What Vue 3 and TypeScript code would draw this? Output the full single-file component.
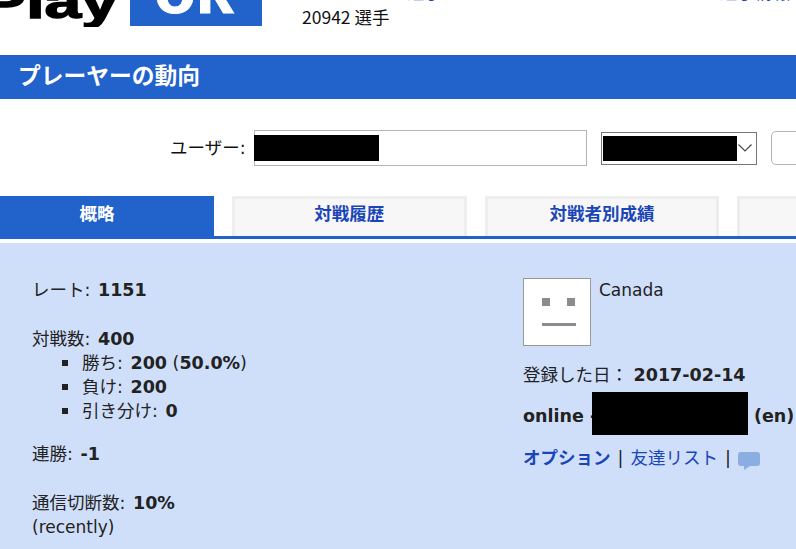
<script setup lang="ts">
const tabs = ['概略', '対戦履歴', '対戦者別成績', '']
</script>

<template>
  <div class="page">
    <header class="top">
      <div class="logo">
        <span class="logo-play">Play</span>
        <span class="logo-ok"><span class="ok-text">ok</span></span>
      </div>
      <div class="top-info">
        <a class="top-link"><span>オンラインの選手たち</span></a>
        <span class="count">20942 選手</span>
      </div>
      <a class="top-link top-right"><span>選手情報</span></a>
    </header>

    <h1 class="title">プレーヤーの動向</h1>

    <form class="search">
      <label class="user-label">ユーザー:</label>
      <div class="user-input"><span class="black user-black"></span></div>
      <div class="select">
        <span class="black select-black"></span>
        <svg class="chevron" width="14" height="8" viewBox="0 0 14 8">
          <path d="M0.5 0.5l6.5 6.5 6.5-6.5" fill="none" stroke="#444" stroke-width="1.1" />
        </svg>
      </div>
      <div class="go"></div>
    </form>

    <nav class="tabs">
      <div v-for="(tab, i) in tabs" :key="i" class="tab" :class="{ active: i === 0 }">{{ tab }}</div>
    </nav>

    <section class="panel">
      <div class="col-left">
        <p class="row">レート: <b class="val">1151</b></p>
        <p class="row gap">対戦数: <b class="val">400</b></p>
        <ul class="list">
          <li>勝ち: <b class="val">200</b> (<b>50.0%</b>)</li>
          <li>負け: <b class="val">200</b></li>
          <li>引き分け: <b class="val">0</b></li>
        </ul>
        <p class="row gap-sm">連勝: <b class="val">-1</b></p>
        <p class="row gap">通信切断数: <b class="val">10%</b></p>
        <p class="row latin recently">(recently)</p>
      </div>
      <div class="col-right">
        <div class="profile">
          <div class="avatar">
            <svg width="66" height="66" viewBox="0 0 66 66">
              <rect x="18" y="19" width="8" height="8" fill="#8c8c8c" />
              <rect x="43" y="19" width="8" height="8" fill="#8c8c8c" />
              <rect x="18" y="44" width="34" height="3" fill="#8c8c8c" />
            </svg>
          </div>
          <span class="country latin">Canada</span>
        </div>
        <p class="reg">登録した日： <b>2017-02-14</b></p>
        <p class="status"><b class="online">online -</b><span class="black status-black"></span><b class="lang">(en)</b></p>
        <p class="links">
          <a class="opt">オプション</a>
          <span class="sep">|</span>
          <a class="friends">友達リスト</a>
          <span class="sep">|</span>
          <svg class="chat" width="22" height="18" viewBox="0 0 22 18">
            <path d="M3 0h16a3 3 0 0 1 3 3v8a3 3 0 0 1-3 3h-7l-6 4v-4H3a3 3 0 0 1-3-3V3a3 3 0 0 1 3-3z" fill="#8aade2" />
          </svg>
        </p>
      </div>
    </section>
  </div>
</template>

<style>
html,
body {
  margin: 0;
  overflow: hidden;
  background: #fff;
}
</style>

<style scoped>
.page {
  width: 796px;
  height: 549px;
  overflow: hidden;
  font-family: "DejaVu Sans", "Noto Sans CJK JP", sans-serif;
  font-size: 17.5px;
  color: #222;
}
.latin {
  font-size: 17px;
}
.top {
  height: 55px;
  display: flex;
  overflow: hidden;
}
.logo {
  width: 302px;
  height: 27px;
  flex: none;
  display: flex;
  overflow: hidden;
}
.logo-play {
  width: 130px;
  height: 66px;
  flex: none;
  margin-top: -21px;
  padding-right: 12px;
  box-sizing: border-box;
  display: flex;
  justify-content: flex-end;
  font-family: "Liberation Sans", sans-serif;
  font-weight: 700;
  font-size: 66px;
  line-height: 66px;
  color: #000;
  white-space: nowrap;
  transform: scaleY(0.7);
  transform-origin: top;
  -webkit-text-stroke: 2px #000;
}
.logo-ok {
  width: 132px;
  height: 26px;
  flex: none;
  background: #2162cb;
  display: flex;
  justify-content: center;
  overflow: hidden;
}
.ok-text {
  color: #fff;
  font-family: "Liberation Sans", sans-serif;
  font-weight: 700;
  font-size: 68px;
  line-height: 68px;
  height: 68px;
  margin-top: -45px;
  margin-right: 4px;
  -webkit-text-stroke: 1px #fff;
}
.top-info {
  width: 418px;
  flex: none;
  display: flex;
  flex-direction: column;
}
.top-link {
  display: block;
  height: 2px;
  overflow: hidden;
  color: #1a45b8;
  white-space: nowrap;
}
.top-link span {
  display: block;
  line-height: 20px;
  margin-top: -17px;
}
.top-right {
  flex: none;
}
.count {
  font-family: "Noto Sans CJK JP", sans-serif;
  color: #111;
  line-height: 24px;
  margin-top: 3px;
}
.title {
  margin: 0;
  height: 44px;
  line-height: 42px;
  padding-left: 18px;
  background: #2162cb;
  color: #fff;
  font-size: 22.75px;
  font-weight: 700;
}
.search {
  height: 97px;
  display: flex;
  align-items: center;
  padding-top: 1px;
  box-sizing: border-box;
  white-space: nowrap;
}
.user-label {
  margin-left: 170px;
  margin-top: -4px;
  width: 84px;
  flex: none;
  color: #111;
}
.user-input {
  width: 333px;
  height: 36px;
  flex: none;
  border: 1px solid #b4b4b4;
  box-sizing: border-box;
  display: flex;
  align-items: center;
}
.black {
  display: block;
  background: #000;
  flex: none;
}
.user-black {
  width: 125px;
  height: 26px;
  margin-left: -1px;
}
.select {
  margin-left: 14px;
  width: 156px;
  height: 33px;
  flex: none;
  border: 1px solid #767676;
  box-sizing: border-box;
  display: flex;
  align-items: center;
  padding-left: 1px;
}
.select-black {
  width: 134px;
  height: 25px;
}
.chevron {
  margin-left: 1px;
  flex: none;
}
.go {
  margin-left: 14px;
  width: 60px;
  height: 34px;
  border: 1px solid #b4b4b4;
  border-radius: 5px;
  box-sizing: border-box;
  flex: none;
}
.tabs {
  height: 43px;
  border-bottom: 3px solid #2162cb;
  box-sizing: border-box;
  display: flex;
  gap: 18px;
  overflow: hidden;
}
.tab {
  width: 234.7px;
  flex: none;
  box-sizing: border-box;
  border: 3px solid #eee;
  border-bottom: 0;
  background: #f7f7f7;
  color: #1a45b8;
  font-weight: 700;
  text-align: center;
  line-height: 30px;
}
.tab.active {
  width: 214px;
  padding-right: 20px;
  border: 0;
  background: #2162cb;
  color: #fff;
  line-height: 36px;
}
.panel {
  margin-top: 4px;
  height: 306px;
  background: #cfdffa;
  display: flex;
}
.col-left {
  width: 523px;
  padding: 35px 0 0 32px;
  box-sizing: border-box;
  flex: none;
}
.row {
  margin: 0;
  line-height: 25px;
}
.val {
  margin-left: 2px;
}
.gap {
  margin-top: 24px;
}
.gap-sm {
  margin-top: 19px;
}
.recently {
  margin-top: -1px;
}
.list {
  margin: -1px 0 0;
  padding-left: 50px;
  list-style: none;
}
.list li {
  line-height: 24px;
}
.list li::before {
  content: "";
  display: inline-block;
  width: 6px;
  height: 6px;
  margin: 0 14px 0 -20px;
  vertical-align: 3px;
  background: #222;
}
.col-right {
  flex: 1;
  padding-top: 35px;
  white-space: nowrap;
}
.profile {
  display: flex;
  gap: 8px;
}
.avatar {
  width: 68px;
  height: 68px;
  border: 1px solid #999;
  box-sizing: border-box;
  background: #fff;
}
.avatar svg {
  display: block;
}
.country {
  line-height: 24px;
}
.reg {
  margin: 17px 0 0;
  line-height: 25px;
}
.status {
  margin: 4px 0 0;
  display: flex;
  align-items: center;
  height: 43px;
}
.online {
  width: 69px;
  flex: none;
  overflow: hidden;
  white-space: nowrap;
  margin-top: 4px;
}
.lang {
  margin-top: 4px;
}
.status-black {
  width: 156px;
  height: 43px;
  margin-right: 6px;
}
.links {
  margin: 11px 0 0;
  display: flex;
  align-items: center;
  gap: 7px;
  line-height: 25px;
}
.opt {
  color: #1a45b8;
  font-weight: 700;
}
.friends {
  color: #1a45b8;
}
.chat {
  margin-top: 5px;
}
</style>
